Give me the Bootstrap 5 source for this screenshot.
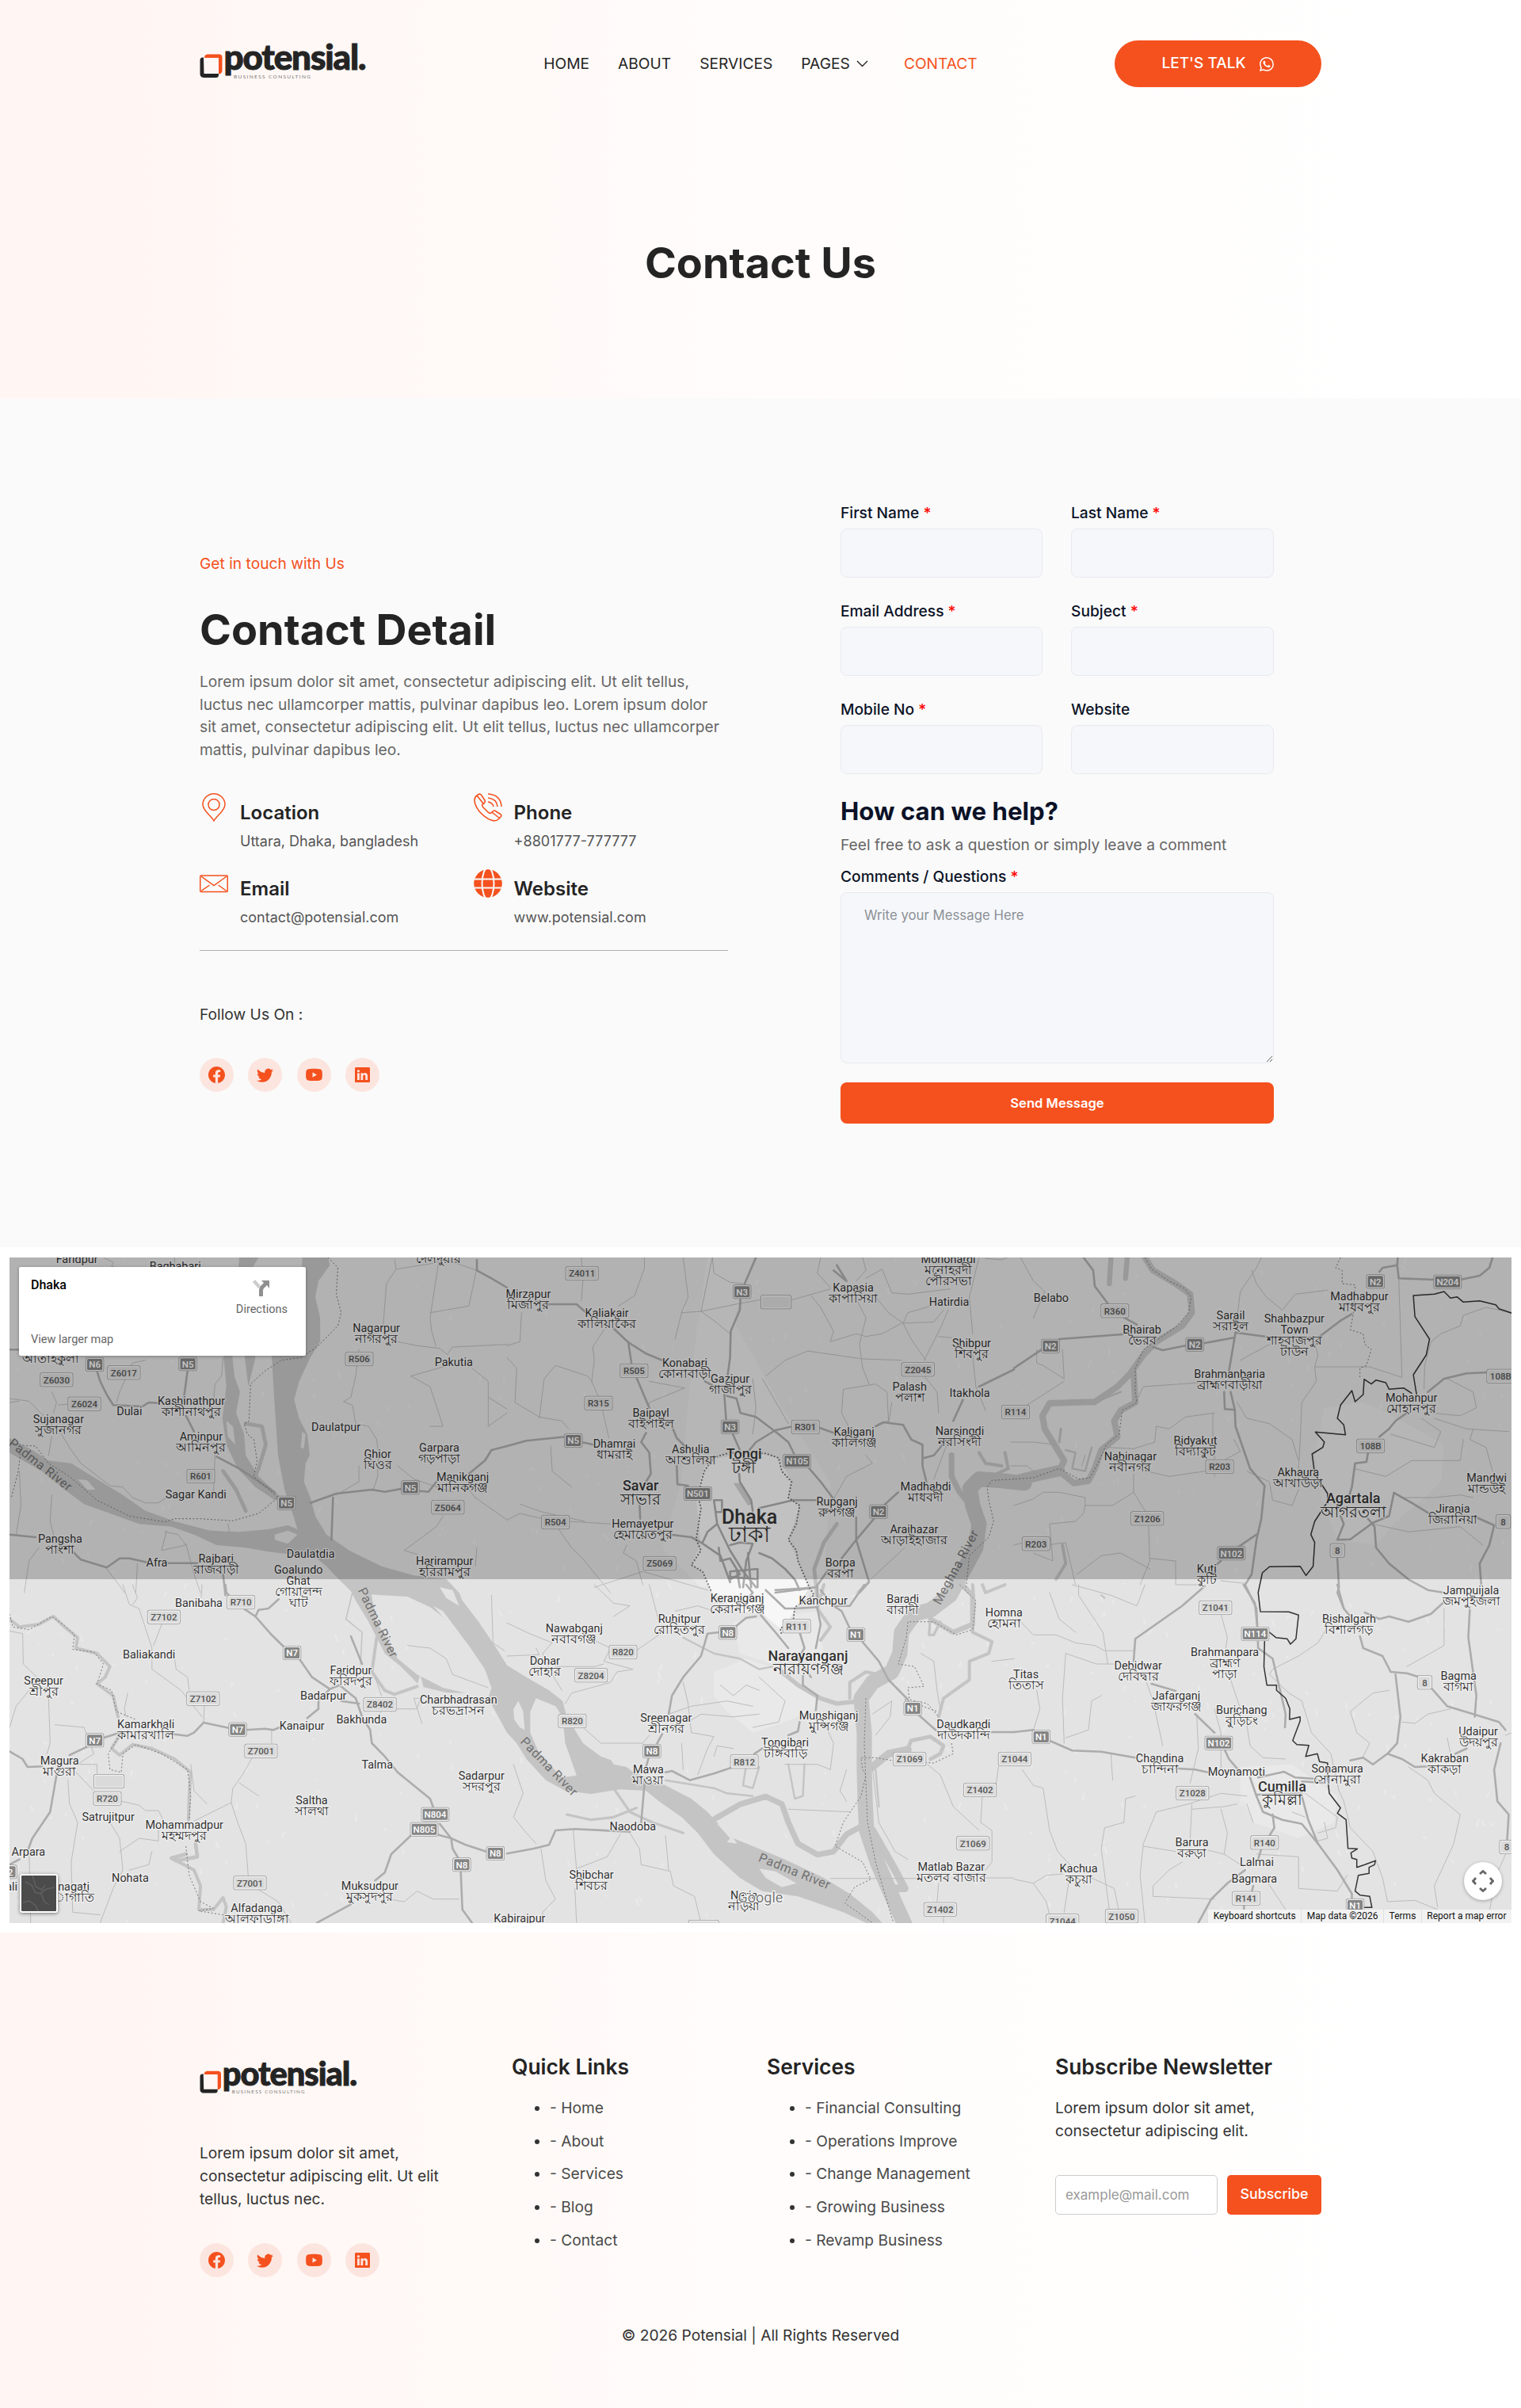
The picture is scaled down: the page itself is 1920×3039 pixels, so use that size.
<!DOCTYPE html>
<html lang="en">
<head>
  <meta charset="UTF-8">
  <meta name="viewport" content="width=device-width, initial-scale=1">
  <title>Contact - Potensial</title>
  <link href="https://cdn.jsdelivr.net/npm/bootstrap@5.3.0/dist/css/bootstrap.min.css" rel="stylesheet">
  <style>
    body { font-family: Inter, "Liberation Sans", sans-serif; font-size: 19.2px; line-height: 28.8px; color: #333; background: #fff; }
    .wrap { width: 1416px; margin: 0 auto; }
    .brand-color { color: #f4511e; }
    .tint { background: linear-gradient(90deg, #fff5f2 0%, #fffdfc 60%, #fff 100%); }
    .hero { height: 503px; }
    .topbar { height: 161px; }
    .topbar .logo-link { margin-bottom: 7px; }
    .main-menu { gap: 36px; margin-left: 49px; }
    .main-menu a { color: #242424; text-decoration: none; white-space: nowrap; }
    .main-menu a.active { color: #f4511e; }
    .main-menu .drop { margin-right: 9px; }
    .talk-btn { width: 261px; height: 59px; border-radius: 30px; background: #f4511e; color: #fff; font-size: 19px; font-weight: 500; gap: 18px; }
    .hero h1, .details h2 { font-size: 54px; line-height: 60px; font-weight: 700; color: #242424; margin: 0; }
    .hero h1 { padding-top: 141px; }

    .contact-area { height: 1071px; background: #fafafa; }
    .details { width: 667px; padding-top: 194px; }
    .details h2 { margin: 39px 0 21px; }
    .details .intro { color: #666; margin: 0 0 40px; white-space: nowrap; }
    .info-grid { display: grid; grid-template-columns: 345.6px 1fr; row-gap: 28px; }
    .info-item { gap: 15px; height: 68px; }
    .info-item svg { flex: none; }
    .info-item h3 { font-size: 24px; line-height: 30px; font-weight: 600; color: #242424; margin: 10px 0 7px; }
    .info-item p { font-size: 18px; line-height: 27px; color: #555; margin: 0; white-space: nowrap; }
    .details hr { margin: 34px 0 66px; border-color: #8a8a8a; opacity: .65; }
    .socials { gap: 18.3px; }
    .socials span { width: 43px; height: 43px; border-radius: 50%; background: #fce5df; }

    .form-side { width: 547px; margin-left: 142px; padding-top: 130px; color: #0b1227; }
    .form-side .fields { display: grid; grid-template-columns: 255px 256px; column-gap: 36px; row-gap: 28px; }
    .form-side label { display: block; font-weight: 500; line-height: 28px; height: 34px; white-space: nowrap; }
    .form-side label i { color: #f00; font-style: normal; }
    .form-side .form-control { height: 62px; background: #f5f7fb; border: 1px solid #e8eaf0; border-radius: 8px; }
    .form-side textarea.form-control { height: 216px; padding: 16px 29px; font-size: 16.8px; }
    .form-side ::placeholder { color: #8d9095; }
    .form-side h3 { font-size: 31.2px; line-height: 38px; font-weight: 700; margin: 28px 0 9px; }
    .form-side .hint { color: #666; margin: 0 0 12px; line-height: 28px; white-space: nowrap; }
    .send-btn { height: 52px; margin-top: 24px; border-radius: 8px; background: #f4511e; color: #fff; font-size: 16.6px; font-weight: 600; }

    .map-area { padding: 13px 12px 12px; }
    .map-box { position: relative; height: 840px; overflow: hidden; background: #e3e3e3; font-family: Roboto, sans-serif; }
    .map-box > svg { display: block; }
    .map-card { position: absolute; left: 12px; top: 12px; width: 362px; height: 112px; padding: 12px 15px 9px; background: #fff; border-radius: 2px; box-shadow: 0 1px 4px rgba(0,0,0,.3); font-size: 14.5px; line-height: 22px; color: #666; }
    .map-card b { font-size: 16px; font-weight: 500; color: #000; }
    .map-card .dir { margin: 4px 8px 0 0; line-height: 16px; }
    .map-thumb { position: absolute; left: 13px; top: 778px; width: 48px; height: 49px; border: 2px solid #fff; border-radius: 3px; box-shadow: 0 1px 4px rgba(0,0,0,.5); background: #4b4b4b; }
    .map-move { position: absolute; left: 1836px; top: 763px; width: 48px; height: 48px; border-radius: 50%; background: #fff; box-shadow: 0 1px 4px rgba(0,0,0,.3); }
    .map-legal { position: absolute; right: 0; bottom: 0; height: 17px; font-size: 12px; line-height: 17px; color: #111; background: #f2f2f2; }
    .map-legal span { padding: 0 6.5px; border-left: 1px solid #e0e0e0; white-space: nowrap; }

    .site-footer { height: 600px; padding-top: 150px; }
    .foot-grid { display: grid; grid-template-columns: 394px 322px 364px 336px; height: 344px; }
    .foot-logo { margin-top: 10px; }
    .foot-text { margin: 59px 0 41px; white-space: nowrap; }
    .foot-grid h4 { font-size: 26.4px; line-height: 30px; font-weight: 600; color: #242424; margin: 4px 0 23px; white-space: nowrap; }
    .foot-grid ul { margin: 0; padding-left: 48px; }
    .foot-grid li { margin-bottom: 12.9px; color: #333; white-space: nowrap; }
    .foot-grid li span { color: #4a4a4a; }
    .news p { margin-bottom: 41px; }
    .news .form-control { width: 205px; height: 50px; border: 1px solid #ccc; border-radius: 5px; font-size: 17px; padding: 0 12px; }
    .news ::placeholder { color: #999; }
    .news .btn { width: 119px; height: 50px; background: #f4511e; color: #fff; font-size: 17.8px; font-weight: 500; border-radius: 5px; padding: 0; }
  </style>
</head>
<body>

<!-- shared symbols -->
<svg width="0" height="0" class="d-none">
  <symbol id="logo" viewBox="0 0 212 48">
    <path d="M5 19.500H4A3.500 3.500 0 0 0 .500 23V40.500A4.500 4.500 0 0 0 5 45H20.500A3.500 3.500 0 0 0 24 41.500V40H5.500Z" fill="#242424"/>
    <path d="M6 20A4.500 4.500 0 0 1 10 15.500H24.500A4 4 0 0 1 28.500 19.500V36A4.500 4.500 0 0 1 24 40.500V20Z" fill="#f4511e"/>
    <text x="30.500" y="34.800" textLength="180" lengthAdjust="spacing" font-family="Lato, sans-serif" font-weight="900" font-size="44" fill="#242424" stroke="#242424" stroke-width="1">potensial.</text>
    <text x="43" y="45.800" textLength="97" font-family="Lato, sans-serif" font-size="6.500" fill="#777">BUSINESS CONSULTING</text>
  </symbol>
  <symbol id="fb" viewBox="0 0 16 16"><path d="M16 8.049c0-4.446-3.582-8.050-8-8.050C3.580 0-.002 3.603-.002 8.050c0 4.017 2.926 7.347 6.750 7.951v-5.625h-2.030V8.050H6.750V6.275c0-2.017 1.195-3.131 3.022-3.131.876 0 1.791.157 1.791.157v1.980h-1.009c-.993 0-1.303.621-1.303 1.258v1.510h2.218l-.354 2.326H9.250V16c3.824-.604 6.750-3.934 6.750-7.951z"/></symbol>
  <symbol id="tw" viewBox="0 0 16 16"><path d="M5.026 15c6.038 0 9.341-5.003 9.341-9.334 0-.140 0-.282-.006-.422A6.685 6.685 0 0 0 16 3.542a6.658 6.658 0 0 1-1.889.518 3.301 3.301 0 0 0 1.447-1.817 6.533 6.533 0 0 1-2.087.793A3.286 3.286 0 0 0 7.875 6.030a9.325 9.325 0 0 1-6.767-3.429 3.289 3.289 0 0 0 1.018 4.382A3.323 3.323 0 0 1 .640 6.575v.045a3.288 3.288 0 0 0 2.632 3.218 3.203 3.203 0 0 1-.865.115 3.230 3.230 0 0 1-.614-.057 3.283 3.283 0 0 0 3.067 2.277A6.588 6.588 0 0 1 .780 13.580a6.320 6.320 0 0 1-.780-.045A9.344 9.344 0 0 0 5.026 15z"/></symbol>
  <symbol id="yt" viewBox="0 0 16 16"><path fill-rule="evenodd" d="M3 2.500C8 2 8 2 13 2.500Q15.600 2.700 15.800 5.500Q16 8 15.800 10.500Q15.600 13.300 13 13.500C8 13.900 8 13.900 3 13.500Q.400 13.300.200 10.500Q0 8 .200 5.500Q.400 2.700 3 2.500ZM6.500 5.600V10.400L10.600 8Z"/></symbol>
  <symbol id="li" viewBox="0 0 16 16"><path fill-rule="evenodd" d="M0 1.146C0 .513.526 0 1.175 0h13.650C15.474 0 16 .513 16 1.146v13.708c0 .633-.526 1.146-1.175 1.146H1.175C.526 16 0 15.487 0 14.854V1.146zm4.943 12.248V6.169H2.542v7.225h2.401zm-1.200-8.212c.837 0 1.358-.554 1.358-1.248-.015-.709-.520-1.248-1.342-1.248-.822 0-1.359.540-1.359 1.248 0 .694.521 1.248 1.327 1.248h.016zm4.908 8.212V9.359c0-.216.016-.432.080-.586.173-.431.568-.878 1.232-.878.869 0 1.216.662 1.216 1.634v3.865h2.401V9.250c0-2.220-1.184-3.252-2.764-3.252-1.274 0-1.845.700-2.165 1.193v.025h-.016l.016-.025V6.169h-2.400c.030.678 0 7.225 0 7.225h2.400z"/></symbol>
</svg>

<header class="hero tint">
  <div class="wrap topbar d-flex align-items-center justify-content-between">
    <a href="#" class="logo-link"><svg width="212" height="48" class="d-block"><use href="#logo"/></svg></a>
    <nav class="main-menu d-flex">
      <a href="#">HOME</a>
      <a href="#">ABOUT</a>
      <a href="#">SERVICES</a>
      <a href="#" class="drop d-flex align-items-center">PAGES
        <svg class="ms-2" width="15" height="9" viewBox="0 0 15 9" fill="none" stroke="#242424" stroke-width="1.400"><path d="M1 1l6.500 6.500L14 1"/></svg>
      </a>
      <a href="#" class="active">CONTACT</a>
    </nav>
    <a href="#" class="talk-btn d-flex align-items-center justify-content-center text-decoration-none">LET'S TALK
      <svg width="18" height="18" viewBox="0 0 16 16" fill="#fff"><path d="M13.601 2.326A7.854 7.854 0 0 0 7.994 0C3.627 0 .068 3.558.064 7.926c0 1.399.366 2.760 1.057 3.965L0 16l4.204-1.102a7.933 7.933 0 0 0 3.790.965h.004c4.368 0 7.926-3.558 7.930-7.930A7.898 7.898 0 0 0 13.600 2.326zM7.994 14.521a6.573 6.573 0 0 1-3.356-.920l-.240-.144-2.494.654.666-2.433-.156-.251a6.560 6.560 0 0 1-1.007-3.505c0-3.626 2.957-6.584 6.591-6.584a6.560 6.560 0 0 1 4.660 1.931 6.557 6.557 0 0 1 1.928 4.660c-.004 3.639-2.961 6.592-6.592 6.592zm3.615-4.934c-.197-.099-1.170-.578-1.353-.646-.182-.065-.315-.099-.445.099-.133.197-.513.646-.627.775-.114.133-.232.148-.430.050-.197-.100-.836-.308-1.592-.985-.590-.525-.985-1.175-1.103-1.372-.114-.198-.011-.304.088-.403.087-.088.197-.232.296-.346.100-.114.133-.198.198-.330.065-.134.034-.248-.015-.347-.050-.099-.445-1.076-.612-1.470-.160-.389-.323-.335-.445-.340-.114-.007-.247-.007-.380-.007a.729.729 0 0 0-.529.247c-.182.198-.691.677-.691 1.654 0 .977.710 1.916.810 2.049.098.133 1.394 2.132 3.383 2.992.470.205.840.326 1.129.418.475.152.904.129 1.246.080.380-.058 1.171-.480 1.338-.943.164-.464.164-.860.114-.943-.049-.084-.182-.133-.380-.232z"/></svg>
    </a>
  </div>
  <h1 class="text-center">Contact Us</h1>
</header>

<section class="contact-area">
  <div class="wrap d-flex">
    <div class="details">
      <div class="brand-color">Get in touch with Us</div>
      <h2>Contact Detail</h2>
      <p class="intro">Lorem ipsum dolor sit amet, consectetur adipiscing elit. Ut elit tellus,<br>luctus nec ullamcorper mattis, pulvinar dapibus leo. Lorem ipsum dolor<br>sit amet, consectetur adipiscing elit. Ut elit tellus, luctus nec ullamcorper<br>mattis, pulvinar dapibus leo.</p>
      <div class="info-grid">
        <div class="info-item d-flex">
          <svg width="36" height="36" viewBox="0 0 36 36" fill="none" stroke="#f4511e" stroke-width="1.500"><path d="M18 35C14 28 4 22 4 14.500A14 13.700 0 0 1 32 14.500C32 22 22 28 18 35Z"/><circle cx="18" cy="14.500" r="7"/></svg>
          <div><h3>Location</h3><p>Uttara, Dhaka, bangladesh</p></div>
        </div>
        <div class="info-item d-flex">
          <svg width="36" height="36" viewBox="0 0 36 36" fill="none" stroke="#f4511e" stroke-width="1.600" stroke-linejoin="round"><path d="M4 3L7 1Q9 1 10 3L14 9Q15 11 13 13L11 14Q10 16 12 18L18 24Q20 26 22 25L24 23Q26 21 28 23L33 26Q36 28 34 30L31 33Q28 36 22 34Q14 31 7 23Q1 15 1 9Q1 5 4 3ZM4 3L12 13M23 24L33 32M18 1Q34 2 35 17M18 6Q29 7 30 17M18 11Q24 12 25 17"/></svg>
          <div><h3>Phone</h3><p>+8801777-777777</p></div>
        </div>
        <div class="info-item d-flex">
          <svg width="36" height="36" viewBox="0 0 36 36" fill="none" stroke="#f4511e" stroke-width="1.500"><rect x=".750" y="8" width="34.500" height="20.500" rx="1"/><path d="M2 9L18 20.500L34 9M2 27.500L12.500 20M34 27.500L23.500 20"/></svg>
          <div><h3>Email</h3><p>contact@potensial.com</p></div>
        </div>
        <div class="info-item d-flex">
          <svg width="36" height="36" viewBox="0 0 36 36"><circle cx="18" cy="18" r="17.800" fill="#f4511e"/><g fill="none" stroke="#fafafa" stroke-width="2"><path d="M0 12.500H36M0 23.500H36"/><ellipse cx="18" cy="18" rx="7.500" ry="20"/></g></svg>
          <div><h3>Website</h3><p>www.potensial.com</p></div>
        </div>
      </div>
      <hr>
      <div class="mb-4 pb-3">Follow Us On :</div>
      <div class="socials d-flex">
        <span class="d-flex align-items-center justify-content-center"><svg width="21" height="21" fill="#f4511e"><use href="#fb"/></svg></span>
        <span class="d-flex align-items-center justify-content-center"><svg width="21" height="21" fill="#f4511e"><use href="#tw"/></svg></span>
        <span class="d-flex align-items-center justify-content-center"><svg width="21" height="21" fill="#f4511e"><use href="#yt"/></svg></span>
        <span class="d-flex align-items-center justify-content-center"><svg width="19" height="19" fill="#f4511e"><use href="#li"/></svg></span>
      </div>
    </div>

    <form class="form-side">
      <div class="fields">
        <div><label>First Name <i>*</i></label><input class="form-control"></div>
        <div><label>Last Name <i>*</i></label><input class="form-control"></div>
        <div><label>Email Address <i>*</i></label><input class="form-control"></div>
        <div><label>Subject <i>*</i></label><input class="form-control"></div>
        <div><label>Mobile No <i>*</i></label><input class="form-control"></div>
        <div><label>Website</label><input class="form-control"></div>
      </div>
      <h3>How can we help?</h3>
      <p class="hint">Feel free to ask a question or simply leave a comment</p>
      <label>Comments / Questions <i>*</i></label>
      <textarea class="form-control" placeholder="Write your Message Here"></textarea>
      <button type="button" class="send-btn btn w-100">Send Message</button>
    </form>
  </div>
</section>

<section class="map-area">
  <div class="map-box">
    <svg id="map" width="1896" height="840" viewBox="12 1587 1896 840"></svg>
    <div class="map-card d-flex justify-content-between">
      <div class="d-flex flex-column justify-content-between"><b>Dhaka</b><span>View larger map</span></div>
      <div class="dir text-center">
        <svg width="22" height="22" viewBox="0 0 22 22" class="d-block mx-auto mb-2"><path d="M0 3L3 0L10 8L7 11Z" fill="#ccc"/><path d="M8 21V13Q8 10 10 8L14 4L11 1H21V11L18 7L14 11Q13 12 13 14V21Z" fill="#909090"/></svg>
        Directions
      </div>
    </div>
    <div class="map-thumb"><svg width="44" height="45" fill="none" stroke="#696969" stroke-width="1.500"><path d="M5 8l8 4 4 9 8 2 4 10 6 4M14 0l4 14 8 4 4-6M2 34l8-2 8 6 3 7M24 22l8-5 10-2" opacity=".7"/></svg></div>
    <div class="map-move d-flex align-items-center justify-content-center">
      <svg width="28" height="28" viewBox="0 0 28 28" fill="none" stroke="#666" stroke-width="2.800"><path d="M10 5L14 1.500L18 5M10 23L14 26.500L18 23M5 10L1.500 14L5 18M23 10L26.500 14L23 18"/></svg>
    </div>
    <div class="map-legal d-flex"><span>Keyboard shortcuts</span><span>Map data ©2026</span><span>Terms</span><span>Report a map error</span></div>
  </div>
</section>

<footer class="site-footer tint">
  <div class="wrap">
    <div class="foot-grid">
      <div>
        <svg width="200.500" height="45.400" class="d-block foot-logo"><use href="#logo"/></svg>
        <p class="foot-text">Lorem ipsum dolor sit amet,<br>consectetur adipiscing elit. Ut elit<br>tellus, luctus nec.</p>
        <div class="socials d-flex">
          <span class="d-flex align-items-center justify-content-center"><svg width="21" height="21" fill="#f4511e"><use href="#fb"/></svg></span>
          <span class="d-flex align-items-center justify-content-center"><svg width="21" height="21" fill="#f4511e"><use href="#tw"/></svg></span>
          <span class="d-flex align-items-center justify-content-center"><svg width="21" height="21" fill="#f4511e"><use href="#yt"/></svg></span>
          <span class="d-flex align-items-center justify-content-center"><svg width="19" height="19" fill="#f4511e"><use href="#li"/></svg></span>
        </div>
      </div>
      <div>
        <h4>Quick Links</h4>
        <ul>
          <li><span>- Home</span></li>
          <li><span>- About</span></li>
          <li><span>- Services</span></li>
          <li><span>- Blog</span></li>
          <li><span>- Contact</span></li>
        </ul>
      </div>
      <div>
        <h4>Services</h4>
        <ul>
          <li><span>- Financial Consulting</span></li>
          <li><span>- Operations Improve</span></li>
          <li><span>- Change Management</span></li>
          <li><span>- Growing Business</span></li>
          <li><span>- Revamp Business</span></li>
        </ul>
      </div>
      <div class="news">
        <h4>Subscribe Newsletter</h4>
        <p>Lorem ipsum dolor sit amet,<br>consectetur adipiscing elit.</p>
        <div class="d-flex justify-content-between">
          <input class="form-control" placeholder="example@mail.com">
          <button type="button" class="btn">Subscribe</button>
        </div>
      </div>
    </div>
    <div class="text-center">© 2026 Potensial | All Rights Reserved</div>
  </div>
</footer>

<script>
// Map sheets: origin on the page, then water, roads and labels in sheet units (2.45 x 3 per pixel)
const sheets = [
  { o: [0, 1570],
    area: ['935,51 1015,51 1020,80 985,140 975,200 990,280 990,370 960,430 925,520 910,590 925,660 950,720 958,800 945,830 940,900 960,960 975,1030 1010,1100 1080,1160 1180,1220 1280,1255 1380,1268 1420,1320 1430,1350 1480,1430 1530,1520 1568,1595 1568,1850 1510,1720 1520,1680 1500,1610 1450,1520 1400,1440 1330,1375 1260,1335 1180,1330 1090,1320 1040,1260 1010,1220 980,1190 900,1175 830,1165 760,1150 670,1140 600,1100 530,1070 430,1060 340,1020 260,985 200,930 130,860 29,790 29,735 100,780 150,820 220,830 300,890 380,950 450,1010 540,1050 650,1085 740,1090 830,1080 890,1065 920,1080 905,1020 880,930 860,800 850,620 840,420 880,420 920,330 930,200',
      '740,51 800,51 770,110 765,300 790,430 768,540 757,430 730,200',
      '690,400 718,420 725,500 742,560 730,640 755,720 760,800 800,880 870,960 850,970 790,920 735,850 700,760 688,660 700,540'],
    isle: ['850,1100 890,1085 920,1100 890,1135 850,1120', '935,710 945,720 940,775 930,770', '240,890 270,895 295,930 270,930', '700,670 720,690 728,760 705,730'],
    stream: ['1,5:730,840 790,890 860,950 910,1010', '6,1:760,680 810,690 822,760 800,850 785,890', '6,1:690,860 730,930 760,1010'],
    road: ['29,400 60,400', '580,480 568,590', '575,650 600,710', '670,805 740,850 850,940', '960,980 1040,945 1150,930 1190,938 1250,925', '1300,935 1325,938 1350,900', '1450,870 1500,820 1520,780 1568,765', '1030,960 1025,1120', '300,480 310,520 330,570 350,610 440,615 460,600 490,602', '29,1100 110,1110', '225,1165 250,1195 330,1225 370,1190 400,1190 455,1205', '520,1208 610,1208', '690,1250 697,1330', '1475,60 1475,100 1520,130 1568,165'],
    lane: ['29,585 90,595 130,645 190,720 220,780 250,830 340,915 380,920 410,960 450,980 490,980 515,960', '320,51 350,70 345,85 430,110 540,85 540,51', '160,560 175,600 165,640', '450,440 410,450 370,560 360,600', '690,430 685,500 665,530 660,600', '1110,400 1100,500 1085,580 1062,597 1090,610 1100,680 1140,690 1165,740 1170,790 1168,880 1155,930', '1220,60 1225,95 1195,150 1185,310', '1225,95 1330,75 1380,60 1475,100', '1355,80 1330,280 1335,330 1348,385', '1330,260 1450,235 1475,90', '1230,370 1290,385 1360,395 1385,420', '1385,415 1400,390 1568,380', '1460,470 1510,520 1510,690 1568,640', '1385,460 1270,500 1330,540 1370,690 1330,690', '1510,580 1568,625', '1450,930 1470,960 1568,1045', '1370,1030 1350,1070 1250,1160 1290,1175', '1475,1150 1470,1220', '510,1090 550,1100 575,1140 500,1160 515,1085', '575,1135 600,1250 620,1320', '60,860 65,990 50,1100', '160,950 155,1050 180,1170', '120,1150 90,1200 75,1320', '330,1230 380,1310 385,1320', '660,950 665,800', '1230,840 1280,890 1400,940', '30,600 60,595', '1110,840 1110,900 1040,950', '705,1060 710,1090', '180,610 250,600', '425,1210 420,1320', '160,730 150,800'],
    dots: ['1015,51 1045,90 1040,190 1055,260 1045,310 980,390 930,430 870,440 820,480 775,530 770,670 755,680 765,720 785,740 795,820 785,880 860,960 800,1020 720,1048 620,1040 540,1040 510,1052 400,1030 300,970 215,880 150,830 110,765 40,760', '65,780 55,870 35,960'],
    towns: [[238,58,'Faridpur'],[542,85,'Baghabari'],[156,392,'Ataikula|আতাইকুলা'],[400,632,'Dulai'],[592,594,'Kashinathpur|কাশীনাথপুর'],[181,664,'Sujanagar|সুজানগর'],[622,729,'Aminpur|আমিনপুর'],[606,947,'Sagar Kandi'],[186,1117,'Pangsha|পাংশা'],[485,1207,'Afra'],[668,1192,'Rajbari|রাজবাড়ী'],[961,1173,'Daulatdia'],[923,1233,'Goalundo|Ghat|গোয়ালন্দ|ঘাট'],[1375,1201,'Harirampur|হরিরামপুর'],[1039,693,'Daulatpur'],[1168,796,'Ghior|ঘিওর'],[1358,770,'Garpara|গড়পাড়া'],[1431,882,'Manikganj|মানিকগঞ্জ'],[1164,318,'Nagarpur|নাগরপুর'],[1403,446,'Pakutia'],[1355,15,'Delduar|দেলদুয়ার']],
    tags: [[293,456,'N6'],[581,454,'N5'],[383,487,'Z6017'],[175,514,'Z6030'],[261,605,'Z6024'],[621,879,'R601'],[886,980,'N5'],[1269,922,'N5'],[1385,997,'Z5064'],[1111,435,'R506']] },
  { o: [640, 1570],
    area: [],
    isle: [],
    urban: ['620,820 700,800 790,795 840,810 880,900 870,960 905,990 870,1120 900,1200 935,1300 900,1370 850,1460 790,1400 720,1390 640,1330 600,1240 570,1210 600,1140 585,960 600,880'],
    soft: ['620,51 760,51 700,290 860,640 1000,900 980,1250 600,1300 480,1150 540,900 560,600 590,300'],
    stream: ['24,1:1600,905 1520,895 1460,890 1432,925 1440,990 1460,1060 1450,1150 1410,1240 1370,1330 1310,1385 1260,1400 1220,1470 1215,1550 1190,1620 1130,1660 1095,1720 1105,1850 1105,1990 1108,2120 1112,2220 1145,2340 1180,2440 1235,2590', '9,1:1375,800 1375,880 1400,940 1440,1000', '5,1:1540,790 1550,850 1480,890', '6,1:1020,1060 980,1130 950,1230 960,1340', '8,1:1390,1270 1440,1330 1440,1440 1380,1470 1310,1420', '5,1:1460,790 1480,830 1530,840'],
    water: ['700,905 725,905 760,985 745,990'],
    road: ['770,51 735,150', '722,205 720,250 692,330 690,430 682,500', '672,570 678,670', '695,710 720,780', '750,780 770,750 830,705 885,690', '680,575 710,585 722,640 770,655 830,710 870,750 890,800', '935,850 970,900 1010,965', '965,695 1010,715', '1140,690 1165,675 1225,685 1250,740 1285,760 1285,840 1297,900', '1568,475 1460,540', '1410,590 1380,670', '1360,740 1320,800 1290,810', '120,228 215,228 245,260', '330,320 375,372 430,415 480,440', '375,372 385,450', '400,505 440,620', '510,690 525,735 550,765', '0,765 60,745 180,730', '230,750 268,760', '430,715 415,750 440,790 445,870 430,900', '525,840 527,910 560,915', '612,520 635,535', '505,1100 570,1110 600,1130 660,1180 690,1280', '718,870 720,900 755,970 760,1010', '780,1000 885,970 960,970', '1080,1035 1080,1120 1120,1280 1090,1320', '1210,940 1165,990', '1135,1040 1080,1120 1035,1190', '990,1240 955,1300 830,1320', '640,970 665,970 665,1015 645,1015 640,970', '645,1015 650,1060 620,1090 605,1130', '410,985 412,1040', '780,1170 820,1190 860,1230 890,1270 905,1310', '690,1140 720,1130 760,1135 740,1200 730,1300', '650,1060 690,1160 730,1240 770,1300', '655,1150 660,1200 690,1190 720,1250 690,1270', '690,1280 690,1240 775,1230 775,1300', '710,1230 720,1300', '745,1170 755,1300', '690,1260 775,1270', '1020,80 1050,140 1010,100'],
    lane: ['230,51 232,90', '235,135 230,215', '425,51 425,90 395,195 345,235', '545,51 560,200 540,260 520,360', '0,385 40,370 45,260', '300,325 265,390 270,440 262,520 290,600 315,735', '0,430 30,470 25,600 100,655 170,670 190,700', '100,660 115,510 150,460 250,500 262,520', '135,765 140,860 200,920', '0,1045 40,1020 110,1040', '190,1050 320,1060', '40,985 110,1015 240,1050', '160,1080 200,1150 240,1200 320,1320', '720,225 790,210', '880,212 1000,170', '540,260 600,255 720,225', '600,255 640,290 690,340', '730,150 690,145 640,110 635,51 600,255', '1000,165 960,110 970,51', '940,195 970,240 1010,330 1000,370 1080,340 1110,350 1160,340 1220,300', '1140,200 1180,260 1225,300 1320,295 1350,250', '1225,300 1240,260 1310,235', '1225,300 1250,360 1295,440', '1290,440 1340,320 1365,250', '800,500 860,440 930,405 1100,435 1220,440', '1085,220 1110,280 1090,380 1100,470 1120,530', '1040,550 1140,530 1175,560 1180,670 1150,680', '1040,550 1035,640 1060,700', '1290,500 1330,560 1335,640', '1335,350 1375,355', '1440,420 1450,540 1480,630', '1460,51 1430,200 1440,340', '1110,800 1130,830 1050,880 1010,965', '1320,890 1360,760', '1230,1150 1080,1320', '1190,600 1180,680', '1110,130 1160,95 1190,185 1240,190 1370,170', '1568,40 1530,60 1480,55', '370,1140 360,1170 400,1200 420,1290', '270,1300 420,1240 620,1310', '440,520 550,545 440,600 430,700', '1100,51 1110,100 1080,140', '760,510 770,620 760,720', '790,510 870,680'],
    dots: ['1568,890 1500,895 1485,920 1490,970 1505,1050 1490,1110 1430,1180 1420,1300'],
    bounds: ['640,808 690,790 800,793 840,810 850,860 880,900 870,960 905,990 895,1060 870,1120 895,1160 900,1200 935,1300 950,1330 890,1375 885,1430 845,1455 850,1480', '640,808 610,860 590,950 600,1000 585,1120 600,1160 570,1215 605,1240 630,1310'],
    towns: [[66,190,'Mirzapur|মির্জাপুর'],[309,262,'Kaliakair|কালিয়াকৈর'],[550,451,'Konabari|কোনাবাড়ী'],[690,511,'Gazipur|গাজীপুর'],[445,640,'Baipayl|বাইপাইল'],[332,756,'Dhamrai|ধামরাই'],[568,777,'Ashulia|আশুলিয়া'],[733,794,'Tongi|টঙ্গী',18],[413,915,'Savar|সাভার',18],[420,1059,'Hemayetpur|হেমায়েতপুর'],[750,1031,'Dhaka|ঢাকা',25],[1073,712,'Kaliganj|কালিগঞ্জ'],[1021,976,'Rupganj|রুপগঞ্জ'],[1031,1207,'Borpa|বরপা'],[1295,919,'Madhabdi|মাধবদী'],[1259,1081,'Araihazar|আড়াইহাজার'],[1400,709,'Narsingdi|নরসিংদী'],[1431,564,'Itakhola'],[1245,541,'Palash|পলাশ'],[1437,375,'Shibpur|শিবপুর'],[1367,218,'Hatirdia'],[1365,58,'Monohardi|মনোহরদী|পৌরসভা'],[1071,164,'Kapasia|কাপাসিয়া']],
    tags: [[232,111,'Z4011'],[727,181,'N3'],[832,220,'      '],[393,480,'R505'],[283,602,'R315'],[205,744,'N5'],[690,692,'N3'],[923,693,'R301'],[897,822,'N105'],[590,945,'N501'],[150,1053,'R504'],[472,1209,'Z5069'],[1149,1013,'N2'],[1271,475,'Z2045']] },
  { o: [1280, 1570],
    area: [], isle: [],
    soft: ['960,620 1080,600 1170,650 1330,760 1320,900 1270,960 1180,1050 1120,1140 1000,1120 950,960 930,800'],
    stream: ['10,1:405,51 430,100 500,150 545,190 550,260 520,310 440,370 400,420 360,490 320,540 250,598 180,600 110,603 88,650 95,700 130,770 155,820 140,860 185,905 230,897 250,850 270,780 320,730 310,670 330,630 375,600 370,490', '18,1:-20,905 60,880 140,858', '8,1:300,51 295,150', '8,1:350,51 345,130', '5,1:150,1140 160,1210 130,1270', '4,1:145,700 140,750', '3,1:270,1330 280,1340', '3,1:250,600 330,560', '3,1:160,780 190,790 180,850 220,860 240,770'],
    road: ['215,51 245,100 250,160 290,225', '335,275 380,305', '0,470 85,400', '140,360 335,342', '430,390 460,402 530,385', '590,375 680,355', '685,335 785,352', '945,350 1010,290 1045,265', '1130,105 1140,90 1185,80 1187,51', '1185,80 1190,130 1300,135', '1380,135 1440,120 1470,90 1480,51', '685,335 665,480', '650,560 652,625 683,628 670,560', '683,628 685,690 730,850 775,915 765,1040 750,1120 735,1250 715,1290 750,1380 755,1530 800,1570 840,1780 838,1830', '750,1100 690,1150', '640,1200 610,1230', '1280,560 1330,510 1400,490 1475,485', '1215,640 1180,670 1160,700 1130,730', '1095,790 1090,825 1055,830 1045,920 1035,960', '1175,942 1230,980 1290,1025', '1430,1035 1485,1065 1470,1140 1440,1210 1445,1290', '1175,942 1160,1030 1110,1055 1040,1118 1000,1120 1020,1060 1010,1030', '1000,1190 1005,1300 1000,1320 1020,1380', '1095,1040 1115,1070 1120,1150 1160,1210 1220,1270 1280,1310 1330,1320'],
    lane: ['20,51 60,140 95,180 60,280', '220,800 210,840', '690,280 700,180 750,90 765,51', '735,100 750,150 780,200 830,250 870,190 970,175', '150,400 155,510 90,460 70,450 70,400', '155,520 40,610', '1190,130 1200,505 1100,465 930,465 935,520 890,600 885,750 880,850', '1540,260 1460,240 1390,270 1380,310 1320,340 1290,370 1270,460 1268,550', '380,590 400,540 570,525', '615,640 615,770', '620,640 530,655 480,700 440,690 435,750 370,775 290,770', '410,860 480,880 590,860', '640,825 700,785', '700,785 680,740', '370,870 370,940 305,990 220,990 215,1020 190,1050 110,1060 120,1200 60,1170', '370,940 415,1030 420,1200 390,1290', '0,990 60,965 90,940 140,940 220,960 220,990', '195,1250 270,1180 330,1170 420,1230', '0,1140 30,1130', '100,1140 160,1130 190,1290', '420,1190 500,1200 500,1290 570,1290', '700,440 790,380', '720,860 790,900 800,970 860,990 880,930', '930,370 940,420 930,465', '690,600 720,660 790,680 860,740 880,820', '1340,510 1420,560 1430,620 1380,650 1290,640', '1300,660 1400,700 1530,710', '1165,720 1300,770 1320,710 1260,660', '1420,700 1410,740 1460,770 1480,860', '1200,960 1300,960 1380,950 1420,960', '1050,850 1150,880 1230,820 1380,820 1390,740', '1110,1060 1220,1090 1380,1070 1450,1140', '-10,840 40,840 70,870', '-10,750 60,750 130,760', '620,740 620,880', '640,1275 715,1285'],
    dots: ['405,51 425,95 480,140 530,170 548,200 540,260 500,315 440,365 400,400 375,470 375,560 380,600 335,630 325,720 285,760 260,830 235,885 200,890 140,850 60,885 0,890', '1010,51 995,90 1015,100 1015,150 1055,155 1050,260 1040,325 1080,340 1085,380 1105,400 1090,460 1070,470 1070,510'],
    border: ['1540,262 1500,245 1490,230 1440,215 1390,220 1370,200 1350,205 1330,180 1300,190 1235,195 1240,275 1285,360 1275,420 1235,495 1245,570', '1230,565 1205,545 1160,550 1150,525 1120,515 1105,530 1083,512 1080,570 1055,597 1045,555 1010,610 1000,660 1020,685 1025,722 932,712 960,750 955,770 922,795 930,870 970,945 970,975 930,1050 918,1100 930,1130 925,1220 903,1255 885,1220 790,1222 768,1245 755,1320 762,1392 850,1393 880,1405 872,1495 855,1515 845,1495 810,1490 790,1470'],
    towns: [[115,205,'Belabo'],[396,325,'Bhairab|ভৈরব'],[670,270,'Sarail|সরাইল'],[867,281,'Shahbazpur|Town|শাহবাজপুর|টাউন'],[1068,198,'Madhabpur|মাধবপুর'],[667,493,'Brahmanbaria|ব্রাহ্মণবাড়ীয়া'],[561,743,'Bidyakut|বিদ্যাকুট'],[360,803,'Nabinagar|নবীনগর'],[879,864,'Akhaura|আখাউড়া'],[1049,963,'Agartala|আগরতলা',18],[1229,583,'Mohanpur|মোহানপুর'],[1462,886,'Mandwi|মান্ডউই'],[1357,1003,'Jirania|জিরানিয়া'],[596,1229,'Kuti|কুটি']],
    tags: [[312,253,'R360'],[113,386,'N2'],[559,380,'N2'],[1118,142,'N2'],[1341,143,'N204'],[1505,500,'108B'],[1103,764,'108B'],[5,636,'R114'],[636,843,'R203'],[412,1039,'Z1206'],[68,1135,'R203'],[672,1171,'N102'],[1000,1160,'8'],[1513,1051,'8']] },
  { o: [0, 2000],
    area: ['1075,0 1145,0 1152,60 1165,140 1190,190 1230,280 1290,340 1370,390 1440,410 1380,408 1300,385 1240,310 1190,260 1140,140 1100,60'],
    isle: ['1340,80 1370,100 1425,190 1390,150', '1360,10 1400,20 1420,80 1380,50', '1300,340 1290,380 1310,390'],
    stream: ['5,1:29,130 60,160 120,150 165,120 200,160 240,200 235,240 300,260 340,310 325,350 300,375 350,420 365,500', '5,1:370,570 345,620 370,645 410,605 470,620 540,660 590,710 585,800 583,890', '6,1:605,980 610,1030 545,1045 530,1035 575,1020', '5,1:545,1045 600,1080 620,1140 615,1230 660,1230 690,1185 700,1220 690,1280', '5,1:1165,200 1150,330 1190,400 1220,415 1290,385', '2,1:1090,30 1070,130 1120,180 1115,300'],
    road: ['697,0 700,30 735,75 790,120 840,190 890,250', '790,120 800,95 830,90 862,55', '925,280 965,350 1020,395 985,440 985,470 950,505', '1020,395 1050,380 1100,430 1120,500 1145,550 1150,600 1190,650 1230,710 1290,770 1330,810 1345,860', '1055,440 1110,450', '1085,195 1100,240 1120,300', '1360,905 1395,960 1440,985 1515,1015', '1350,945 1395,960 1400,1000 1420,1040', '1425,1085 1430,1230 1460,1280', '1270,950 1210,1020 1190,1090 1160,1120', '1085,1210 1040,1240 980,1280', '29,630 70,660 85,690 130,688', '215,645 275,610', '320,580 370,560', '530,565 580,572 600,560 630,522 710,543', '760,550 820,545 845,550 865,540', '175,720 155,860 100,960 88,1000', '29,1060 60,1040'],
    lane: ['29,175 70,185 72,300 130,370', '150,420 155,600 145,640', '380,0 400,75 430,90 470,240 470,320 560,400 625,500', '625,0 622,50', '410,0 425,50 410,75', '500,150 475,230', '540,280 545,320 580,350 585,400', '632,455 630,522', '840,550 840,600', '780,655 750,720 720,770 715,825 735,900 760,980 768,1110', '715,825 600,895', '375,820 430,835 450,855 490,855 505,890', '235,710 290,780', '340,900 370,960 380,1080 350,1150 310,1280', '490,930 490,970 430,960 370,1010', '210,740 215,830 240,900 220,1050 225,1240 310,1250', '90,1000 95,1280', '800,1155 860,1200 900,1280', '30,540 50,460 90,400', '170,530 260,540 290,640 240,680', '240,680 300,680 300,720', '1210,480 1230,470 1290,470 1300,430 1280,430 1305,525', '1180,480 1160,510', '1160,350 1180,420', '1260,230 1330,240 1380,280 1400,340 1510,390', '1520,40 1525,220 1560,250', '1200,1190 1250,1200 1290,1160 1340,1190 1420,1190', '590,680 600,780 640,830', '470,1010 460,1060 400,1080', '740,750 800,800', '395,410 385,470 390,500'],
    dots: ['29,110 40,160 90,170 160,120 200,155 230,190 225,245 290,255 320,300 300,375 345,400 360,480 420,510', '370,570 335,640 340,700 375,710 380,640 420,605 500,640 580,700 590,800 585,890', '575,990 585,1100 620,1200 660,1225 615,1235 690,1250'],
    towns: [[615,68,'Banibaha'],[461,263,'Baliakandi'],[135,362,'Sreepur|শ্রীপুর'],[1085,324,'Faridpur|ফরিদপুর'],[1000,419,'Badarpur'],[1418,434,'Charbhadrasan|চরভদ্রাসন'],[934,535,'Kanaipur'],[1118,511,'Bakhunda'],[451,529,'Kamarkhali|কামারখালি'],[184,667,'Magura|মাগুরা'],[1167,682,'Talma'],[1489,723,'Sadarpur|সদরপুর'],[964,817,'Saltha|সালথা'],[335,880,'Satrujitpur'],[570,909,'Mohammadpur|মহম্মদপুর'],[88,1010,'Arpara'],[403,1111,'Nohata'],[1144,1140,'Muksudpur|মুকসুদপুর'],[794,1224,'Alfadanga|আলফাডাঙ্গা'],[228,1143,'nagati|াগাতি'],[36,1143,'ali'],[1607,1262,'Kabirajpur']],
    tags: [[745,66,'R710'],[507,122,'Z7102'],[903,258,'N7'],[628,431,'Z7102'],[1175,453,'Z8402'],[735,548,'N7'],[293,589,'N7'],[807,629,'Z7001'],[337,744,'      '],[332,809,'R720'],[1346,869,'N804'],[1312,926,'N805'],[1532,1017,'N8'],[1428,1060,'N8'],[773,1129,'Z7001'],[32,1087,'2']] },
  { o: [640, 2000],
    area: ['0,305 60,350 130,400 172,440 185,500 210,550 235,600 290,650 360,680 385,705 490,760 570,810 620,860 650,900 700,960 780,1000 860,1040 980,1110 1060,1170 1130,1240 1160,1280 1110,1280 1040,1240 900,1180 790,1160 720,1110 640,1020 590,940 540,880 470,820 430,780 350,775 260,792 180,780 120,740 60,660 30,600 0,560'],
    isle: ['90,430 150,460 172,500 180,600 215,722 170,730 100,640 72,560 72,480', '20,470 35,440 50,480 55,550 40,540 22,510', '780,1075 830,1085 895,1130 850,1145 800,1110', '650,905 665,910 700,960 712,980 680,975 690,960', '300,620 340,640 370,690 330,680'],
    soft: ['640,330 740,280 860,330 950,420 960,470 860,520 760,560 680,480 640,420', '700,140 960,100 980,260 820,300 720,260'],
    stream: ['9,1:640,888 720,832 800,802 850,830 870,900 900,980 960,1022 1010,1010 1050,945 1110,905', '7,1:1095,440 1020,450 970,430 900,380 850,330', '5,1:1060,430 1060,370 1110,330 1170,345', '5,1:980,0 960,90 1000,160 970,210', '3,1:545,200 640,260 720,280 780,320 820,310', '3,1:490,740 640,770 680,790 760,800', '4,1:335,780 380,860 450,900 545,940', '4,1:185,870 260,890 330,880 400,845', '12,1:1130,690 1180,640 1240,625', '6,1:1240,620 1250,590 1310,575 1350,610 1340,640 1310,660', '5,1:1440,0 1445,80 1440,180 1500,215 1490,260 1430,290 1430,360 1350,430 1335,500', '5,1:1540,0 1480,30 1470,0', '3,1:1150,840 1140,700', '12,1:1180,1150 1230,1150 1200,1080 1130,930', '4,1:1310,110 1305,190 1320,190 1340,140', '3,1:740,680 730,760 760,770 780,690', '3,1:870,680 890,810 915,800 920,680'],
    road: ['830,20 900,15 960,10', '770,120 740,125 710,155', '655,180 620,185 600,270 545,350 510,420 500,490', '480,565 460,610', '438,655 430,690', '425,755 415,900', '380,935 210,925 150,930 130,985 80,1000 0,1018', '490,710 510,705 565,740 640,715 700,690', '765,640 790,620', '870,570 900,555 905,520', '905,180 920,240', '915,345 915,380 960,420 955,475', '960,90 970,150 955,240', '890,90 960,85 960,0', '800,20 860,90 890,90', '740,0 760,30 740,60', '970,20 1010,80 1060,80 1105,0', '1010,80 1035,100 1060,165', '1095,210 1150,290 1180,360 1240,435', '1270,490 1330,555', '1490,558 1568,558', '785,115 830,180 870,240', '920,240 900,280 940,350'],
    lane: ['0,145 70,185 140,220 110,260', '0,270 100,265 90,240', '110,260 140,340 170,400', '150,310 270,310 300,300', '260,205 320,240 300,290 390,320 340,330 320,370 200,410 180,450', '400,250 440,215 470,190', '470,140 440,0', '270,0 330,70 380,80 330,120', '520,100 590,80 640,100', '545,370 560,450 570,560', '240,545 290,600 420,600 440,570', '500,490 570,460 680,440 760,460', '570,560 640,575 620,620 590,720', '560,520 600,490 700,500 780,490', '640,650 650,610 700,620', '540,600 545,700', '380,940 410,1000 415,1060 505,1085 515,1140 580,1180 600,1280', '205,930 215,1080', '210,1150 215,1280', '350,945 310,1030 215,1075', '490,950 500,1080', '105,1000 120,1120 150,1190 110,1240 110,1280', '20,680 50,790 20,880 60,940 90,980', '860,680 960,680 1000,700', '1000,700 1010,600 980,520', '1130,690 1150,900 1200,1010 1240,1040', '1300,680 1340,720 1380,840 1460,930', '1470,800 1465,900 1500,930 1500,1050 1480,1080', '1520,690 1510,780 1470,800', '1480,1110 1568,1110', '1000,1112 1270,1112', '1335,1130 1330,1200', '1350,1255 1350,1280', '1280,260 1320,290 1330,400 1340,470', '1500,290 1568,280', '1130,490 1190,440 1185,500 1140,570', '870,850 1060,860', '1050,820 1030,780 1050,700', '780,350 860,440 840,520 760,540', '660,380 700,420 740,380 780,400'],
    dots: ['1400,0 1450,60 1440,170 1390,190 1320,140 1240,140 1235,200 1210,300 1260,310 1290,385 1240,390 1245,435 1300,450 1335,500', '1230,435 1330,480', '1375,600 1380,640 1320,675 1250,670 1190,665 1140,655 1095,655 1100,700 1110,720 1095,800 1040,900 1015,990 1100,1050 1125,1115 1075,1145 1045,1205 1130,1280', '1110,430 1105,600 1115,900 1140,1050 1195,1280'],
    towns: [[712,51,'Keraniganj|কেরানীগঞ্জ'],[978,60,'Kanchpur'],[1224,55,'Baradi|বারাদী'],[208,165,'Nawabganj|নবাবগঞ্জ'],[533,129,'Ruhitpur|রোহিতপুর'],[117,288,'Dohar|দোহার'],[931,268,'Narayanganj|নারায়ণগঞ্জ',18],[995,496,'Munshiganj|মুন্সিগঞ্জ'],[860,598,'Tongibari|টঙ্গিবাড়ি'],[492,504,'Sreenagar|শ্রীনগর'],[437,698,'Mawa|মাওয়া'],[389,916,'Naodoba'],[261,1097,'Shibchar|শিবচর'],[733,1176,'Naria|নড়িয়া'],[1374,1068,'Matlab Bazar|মতলব বাজার'],[1412,529,'Daudkandi|দাউদকান্দি'],[1537,104,'Homna|হোমনা'],[1605,340,'Titas|তিতাস']],
    tags: [[683,181,'N8'],[896,157,'R111'],[1079,189,'N1'],[359,255,'R820'],[260,343,'Z8204'],[1255,468,'N1'],[202,516,'R820'],[448,630,'N8'],[734,670,'R812'],[1245,660,'Z1069'],[1570,660,'Z1044'],[1463,777,'Z1402'],[1441,979,'Z1069'],[1340,1229,'Z1402'],[608,1296,'      ']] },
  { o: [1280, 2000],
    area: [], isle: [], soft: ['700,690 860,680 1000,800 990,900 880,960 740,900 700,800'],
    stream: [],
    road: ['590,5 520,80 375,205 370,290', '710,0 745,70 752,150', '1000,0 1020,90 1060,150', '1085,105 1130,130 1160,120 1220,140 1290,110 1330,65', '1410,85 1405,200 1430,420 1425,500', '1070,195 1080,240 1140,270 1165,330 1215,335 1255,350', '1290,390 1340,460 1420,490 1500,520 1520,550', '1180,340 1195,500 1185,600 1155,640 1110,680 1080,655 1040,665', '1155,640 1200,660 1240,690 1280,688', '1365,640 1400,620', '1505,600 1485,700 1495,820 1530,870 1525,970', '0,558 60,550', '110,590 180,628 270,632 375,655', '500,695 560,700 600,710', '425,375 500,402', '560,490 620,560', '650,620 665,660 700,710', '755,730 835,708 870,730 935,735', '890,745 960,750', '730,730 750,800 770,860 830,890 890,905 940,980 1000,1080 1045,1170 1045,1195', '890,800 910,890 940,980', '800,870 805,920 790,950', '765,1000 755,1040', '715,1080 660,1130 610,1190 570,1280', '740,1140 735,1165', '712,1210 708,1280', '750,795 890,790'],
    lane: ['200,0 200,40 275,180 290,300', '20,140 60,190 130,190 190,220 250,230 280,250 370,250', '160,260 255,300 310,300', '160,260 150,430 155,600', '405,0 380,80 300,40 180,0', '640,110 660,200 655,240', '670,360 700,470', '720,530 730,610 770,655 840,660', '410,370 430,440 460,610', '565,490 570,620 545,750', '300,640 305,740', '25,700 60,760 90,770 110,930 135,1010 180,1070', '0,1115 60,1130 100,1100 150,1095', '60,1130 100,1200 110,1250', '170,1120 155,1240', '240,1110 310,1150 325,1240', '540,830 440,860 400,980 390,1100 405,1280', '540,830 640,790 720,800', '550,850 650,840 690,830', '550,830 545,960', '600,1005 650,1020 700,1060', '520,1050 480,1080 430,1140 430,1180 620,1190', '640,850 660,940 650,1020', '720,830 740,900', '965,170 940,220 880,270 800,320 790,340 850,410 890,440 920,560 980,640 1005,780 1020,820 1040,920 1110,1010 1140,1110 1155,1200 1240,1195 1310,1230', '1330,180 1330,90', '1215,310 1330,230 1330,180', '1160,400 1110,410 1040,480 1060,560 1100,600 1080,650', '1200,520 1240,525 1280,490 1350,470', '1220,690 1280,740 1300,790 1380,870 1360,980 1300,1140 1310,1220', '1350,640 1340,580', '1520,570 1540,560', '1520,1020 1510,1050 1490,1100 1470,1240', '340,900 280,920 270,1000 300,1280', '340,900 345,810 375,800', '160,580 230,550 240,440 270,420', '110,30 140,130 190,180', '750,1020 880,1030 880,1150 1000,1160 1030,1100', '400,990 500,1010', '770,1100 840,1230', '960,900 970,960 940,970', '890,780 1000,880 995,920 940,940', '860,860 900,880', '620,470 640,560 640,700', '70,400 80,470 60,550'],
    border: ['775,215 773,310 782,380 812,380 812,400 840,430 853,470 852,510 885,500 885,515 862,590 875,605 912,608 902,650 938,640 945,670 970,675 970,730 975,790 1010,845 1000,865 1027,890 1033,998 1062,1000 1042,1015 1045,1035 1060,1040 1060,1070 1085,1060 1118,1045 1115,1060 1098,1070 1098,1093 1065,1100 1055,1160 1070,1175 1100,1180 1107,1222 1080,1222'],
    dots: [],
    towns: [[1414,22,'Jampuijala|জমপুইজলা'],[1036,128,'Bishalgarh|বিশালগড়'],[652,254,'Brahmanpara|ব্রাহ্মণ|পাড়া'],[384,307,'Debidwar|দেবিদ্বার'],[502,419,'Jafarganj|জাফরগঞ্জ'],[704,473,'Burichang|বুড়িচং'],[1375,346,'Bagma|বাগমা'],[1436,556,'Udaipur|উদয়পুর'],[1332,657,'Kakraban|কাকড়া'],[1000,697,'Sonamura|সোনামুরা'],[451,657,'Chandina|চান্দিনা'],[688,708,'Moynamoti'],[829,763,'Cumilla|কুমিল্লা',18],[550,975,'Barura|বরুড়া'],[751,1050,'Lalmai'],[743,1114,'Bagmara'],[200,1074,'Kachua|কচুয়া']],
    tags: [[623,87,'Z1041'],[746,186,'N114'],[1270,370,'8'],[84,576,'N1'],[633,599,'N102'],[552,789,'Z1028'],[775,976,'R140'],[718,1187,'R141'],[1055,1215,'N1'],[333,1255,'Z1050'],[150,1273,'Z1044'],[1524,993,'8']] }
];

const rivers = [[51,1849,38,'Padma River'],[477,2048,64,'Padma River'],[693,2230,46,'Padma River'],[1003,2362,22,'Padma River'],[1207,1978,-62,'Meghna River']];

const px = (s, x, y) => [(s.o[0] + x / 2.45).toFixed(1), (s.o[1] + y / 3).toFixed(1)];
const pts = (s, str) => str.split(' ').map(p => px(s, ...p.split(',').map(Number)).join(',')).join(' ');
const lines = (s, list, attrs) => (list || []).map(l => `<polyline points="${pts(s, l)}" ${attrs}/>`).join('');
const areas = (s, list, fill) => (list || []).map(l => `<polygon points="${pts(s, l)}" fill="${fill}"/>`).join('');

function town(s, [x, y, text, size = 14.4]) {
  const [cx, cy] = px(s, x, y).map(Number);
  const step = size > 20 ? 23 : size > 15 ? 17.5 : 14;
  return text.split('|').map((t, i) => {
    const f = t.charCodeAt(0) > 255 ? size * 1.1 : size;
    return `<text x="${cx}" y="${(cy + size * .35 + i * step).toFixed(1)}" font-size="${f.toFixed(1)}" font-weight="${size > 15 ? 500 : 400}">${t}</text>`;
  }).join('');
}

function tag(s, [x, y, t]) {
  const [cx, cy] = px(s, x, y).map(Number);
  const w = t === '8' ? 16 : t.length === 6 ? 36 : t.length * 6.2 + 8, dark = t[0] === 'N' || t === '2';
  return `<rect x="${cx - w / 2 - 1.5}" y="${cy - 9}" width="${w + 3}" height="18" rx="3" fill="#9b9b9b"/>
    <rect x="${cx - w / 2 - .7}" y="${cy - 8.2}" width="${w + 1.4}" height="16.4" rx="2.500" fill="#f0f0f0"/>
    <rect x="${cx - w / 2 + .6}" y="${cy - 7}" width="${w - 1.2}" height="14" rx="1.500" fill="${dark ? '#868686' : '#dadada'}"/>
    <text x="${cx}" y="${cy + 4.2}" fill="${dark ? '#fff' : '#555'}">${t.trim()}</text>`;
}

// light field flecks
let seed = 7;
const rnd = () => (seed = (seed * 16807) % 2147483647) / 2147483647;
let flecks = '';
for (let i = 0; i < 620; i++) {
  const x = 12 + rnd() * 1896, y = 1587 + rnd() * 840;
  flecks += `M${x.toFixed(0)} ${y.toFixed(0)}l${(rnd() * 8 - 4).toFixed(0)} ${(rnd() * 9).toFixed(0)}`;
}

const each = f => sheets.map(f).join('');
document.getElementById('map').innerHTML =
  `<path d="${flecks}" stroke="#e9e9e9" stroke-width="2.500" fill="none"/>` +
  each(s => areas(s, s.soft, '#e9e9e9')) +
  each(s => areas(s, s.area, '#c4c4c4')) +
  each(s => areas(s, s.isle, '#e3e3e3')) +
  each(s => areas(s, s.urban, '#f7f7f7')) +
  each(s => areas(s, s.water, '#d2d2d2')) +
  '<g fill="none" stroke-linejoin="round" stroke-linecap="round">' +
  each(s => (s.stream || []).map(l => { const [w, p] = l.split(':'); return `<polyline points="${pts(s, p)}" stroke="#c4c4c4" stroke-width="${parseFloat(w) * .8}"/>`; }).join('')) +
  each(s => lines(s, s.lane, 'stroke="#bcbcbc" stroke-width="1"')) +
  each(s => lines(s, s.road, 'stroke="#acacac" stroke-width="2.600"')) +
  each(s => lines(s, s.dots, 'stroke="#777" stroke-width="1" stroke-dasharray="2 2.500" stroke-linecap="butt"')) +
  each(s => lines(s, s.bounds, 'stroke="#777" stroke-width="2.200" stroke-dasharray=".1 4"')) +
  each(s => lines(s, s.border, 'stroke="#333" stroke-width="1.500"')) + '</g>' +
  '<g font-size="11.5" font-weight="500" text-anchor="middle">' + each(s => s.tags.map(t => tag(s, t)).join('')) + '</g>' +
  '<g fill="#333" stroke="#f2f2f2" stroke-width="2.500" stroke-opacity=".85" paint-order="stroke" stroke-linejoin="round" text-anchor="middle">' + each(s => s.towns.map(t => town(s, t)).join('')) + '</g>' +
  rivers.map(([x, y, a, t]) => `<text transform="translate(${x} ${y}) rotate(${a})" y="5" font-size="16" letter-spacing=".6" text-anchor="middle" fill="#707070">${t}</text>`).join('') +
  '<text x="960" y="2401" font-size="18" text-anchor="middle" fill="#777" stroke="#fff" stroke-width="2" paint-order="stroke">Google</text>' +
  '<rect x="12" y="1587" width="1896" height="406" fill="#000" opacity=".215"/>';
</script>
<script src="https://cdn.jsdelivr.net/npm/bootstrap@5.3.0/dist/js/bootstrap.bundle.min.js"></script>
</body>
</html>
